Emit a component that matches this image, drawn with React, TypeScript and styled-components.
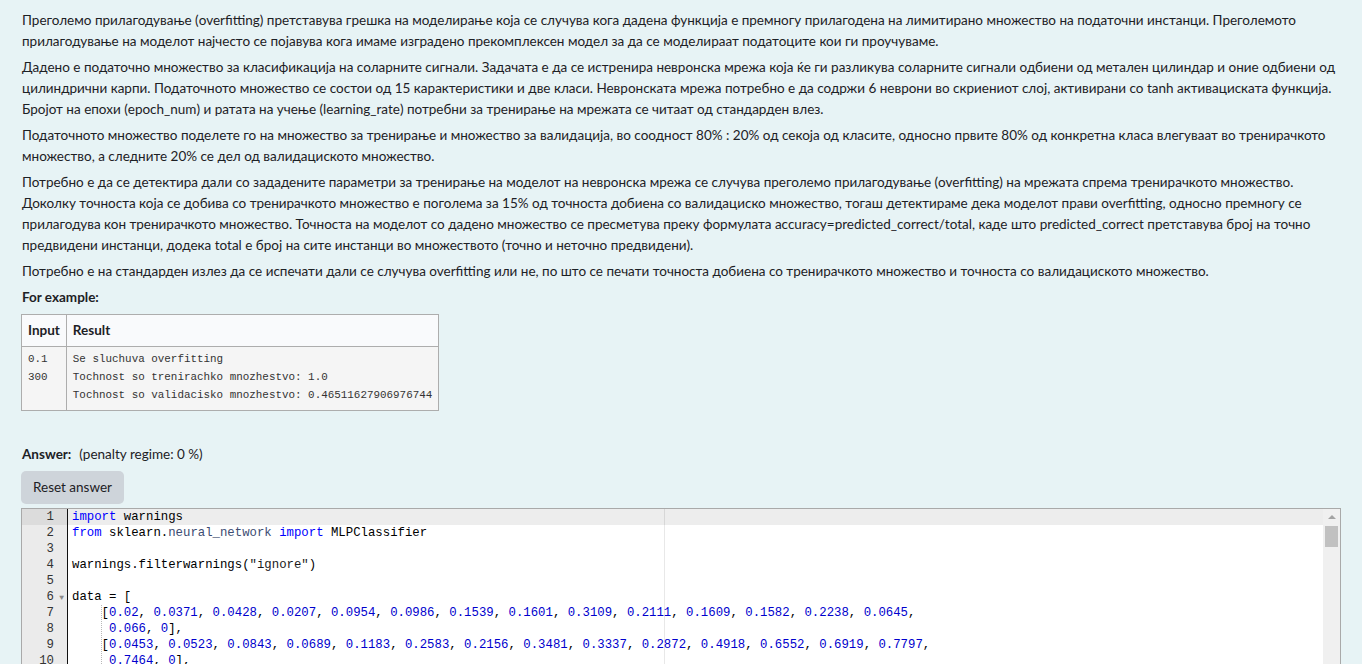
import React from 'react';
import styled, { createGlobalStyle } from 'styled-components';

// ── Global ────────────────────────────────────────────────────────────────

const GlobalStyle = createGlobalStyle`
  html, body {
    margin: 0;
    padding: 0;
    overflow: hidden;
    background: #e7f3f5;
  }
  body {
    font-family: Lato, "Noto Sans", sans-serif;
    font-size: 13.5px;
    color: #1d2125;
  }
`;

// ── Question text ─────────────────────────────────────────────────────────

const Page = styled.div`
  padding: 10px 21px 0 21px;
`;

const Para = styled.p`
  margin: 0 0 5px;
  line-height: 21px;
  padding-left: 1px;
`;

const Heading = styled.div`
  font-weight: 700;
  line-height: 21px;
  margin: 1px 0 6px;
  padding-left: 1px;
`;

const ExampleTable = styled.table`
  border-collapse: collapse;
  border: 1px solid #adadad;
`;

const Th = styled.th`
  text-align: left;
  font-weight: 700;
  line-height: 21px;
  padding: 5px 6px 5px 6px;
  background: #f9fafc;
  border: 1px solid #adadad;
`;

const Td = styled.td`
  vertical-align: top;
  padding: 3px 6px 6px;
  background: #f5f5f5;
  border: 1px solid #adadad;
`;

const Pre = styled.pre`
  margin: 0;
  font-family: "Liberation Mono", "DejaVu Sans Mono", monospace;
  font-size: 10.9px;
  line-height: 18px;
  color: #333;
`;

// ── Answer block ──────────────────────────────────────────────────────────

const AnswerLine = styled.div`
  margin-top: 33px;
  line-height: 21px;
  padding-left: 1px;
  display: flex;
  gap: 8px;
`;

const Bold = styled.span`
  font-weight: 700;
`;

const ResetButton = styled.button`
  display: block;
  margin-top: 6px;
  padding: 6px 12px;
  border: none;
  border-radius: 5px;
  background: #ced4da;
  color: #1d2125;
  font-family: inherit;
  font-size: 13.5px;
  line-height: 21px;
  cursor: pointer;
`;

// ── Code editor ───────────────────────────────────────────────────────────

const Editor = styled.div`
  margin-top: 4px;
  height: 300px;
  border: 1px solid #a9a9a9;
  display: flex;
  background: #fff;
  font-family: "Liberation Mono", "DejaVu Sans Mono", monospace;
  font-size: 12.33px;
  line-height: 16px;
  overflow: hidden;
`;

const Gutter = styled.div`
  width: 45px;
  flex: none;
  background: #ebebeb;
  border-right: 1px solid #111;
  color: #333;
`;

const GutterCell = styled.div<{ $active: boolean }>`
  height: 16px;
  display: flex;
  justify-content: flex-end;
  padding-right: 13px;
  position: relative;
  background: ${({ $active }) => ($active ? '#dcdcdc' : 'transparent')};
`;

const FoldMark = styled.span`
  position: absolute;
  right: 3px;
  top: 0;
  font-size: 8px;
  color: #8a8a8a;
  line-height: 17px;
`;

const Code = styled.div`
  flex: 1;
  position: relative;
`;

const PrintMargin = styled.div`
  position: absolute;
  top: 0;
  bottom: 0;
  left: calc(4px + 80ch);
  width: 1px;
  background: #e8e8e8;
`;

const CodeLine = styled.div<{ $active: boolean }>`
  position: relative;
  height: 16px;
  padding-left: 4px;
  white-space: pre;
  color: #000;
  background: ${({ $active }) => ($active ? 'rgba(0, 0, 0, 0.07)' : 'transparent')};
`;

const IndentGuide = styled.span`
  display: inline-block;
  width: 4ch;
  height: 16px;
  vertical-align: top;
  background: repeating-linear-gradient(to bottom, #b8b8b8 0 1px, transparent 1px 2px) right top / 1px 100% no-repeat;
`;

const Tok = styled.span<{ $kind: string }>`
  color: ${({ $kind }) =>
    $kind === 'kw' ? '#0000ff' :
    $kind === 'num' ? '#0000cd' :
    $kind === 'str' ? '#1a1a1a' :
    $kind === 'sup' ? '#3c4c72' :
    '#000'};
`;

const Scrollbar = styled.div`
  width: 17px;
  flex: none;
  background: #f0f0f0;
  display: flex;
  flex-direction: column;
  align-items: center;
  padding-top: 6px;
  gap: 7px;
`;

const ArrowUp = styled.div`
  width: 0;
  height: 0;
  border-left: 4px solid transparent;
  border-right: 4px solid transparent;
  border-bottom: 4px solid #a3a3a3;
`;

const Thumb = styled.div`
  width: 13px;
  height: 21px;
  background: #c1c1c1;
`;

// ── Data ──────────────────────────────────────────────────────────────────

const CODE = [
  'import warnings',
  'from sklearn.neural_network import MLPClassifier',
  '',
  'warnings.filterwarnings("ignore")',
  '',
  'data = [',
  '    [0.02, 0.0371, 0.0428, 0.0207, 0.0954, 0.0986, 0.1539, 0.1601, 0.3109, 0.2111, 0.1609, 0.1582, 0.2238, 0.0645,',
  '     0.066, 0],',
  '    [0.0453, 0.0523, 0.0843, 0.0689, 0.1183, 0.2583, 0.2156, 0.3481, 0.3337, 0.2872, 0.4918, 0.6552, 0.6919, 0.7797,',
  '     0.7464, 0],',
  '    [0.0262, 0.0582, 0.1099, 0.1083, 0.0974, 0.228, 0.2431, 0.3771, 0.5598, 0.6194, 0.6333, 0.706, 0.5544, 0.532,',
  '     0.6479, 0],',
  '    [0.01, 0.0171, 0.0623, 0.0205, 0.0205, 0.0368, 0.1098, 0.1276, 0.0598, 0.1264, 0.0881, 0.1992, 0.0184, 0.2261,',
  '     0.1729, 0],',
  '    [0.0762, 0.0666, 0.0481, 0.0394, 0.059, 0.0649, 0.1209, 0.2467, 0.3564, 0.4459, 0.4152, 0.3952, 0.4256, 0.4135,',
  '     0.4528, 0],',
  '    [0.0286, 0.0453, 0.0277, 0.0174, 0.0384, 0.099, 0.1201, 0.1833, 0.2105, 0.3039, 0.2988, 0.425, 0.6343, 0.8198,',
  '     1.0, 0],',
];

const FOLDABLE = new Set([6]);

const TOKEN_RE = /(\b(?:import|from)\b|"[^"]*"|\bneural_network\b|\d+(?:\.\d+)?)/g;

function tokenize(text: string) {
  const parts = text.split(TOKEN_RE).filter(p => p !== '');
  return parts.map(p => {
    let kind = 'plain';
    if (p === 'import' || p === 'from') kind = 'kw';
    else if (p.startsWith('"')) kind = 'str';
    else if (p === 'neural_network') kind = 'sup';
    else if (/^\d/.test(p)) kind = 'num';
    return { kind, text: p };
  });
}

const renderLine = (line: string) => {
  const lead = line.length - line.trimStart().length;
  const guides = line.trim() === '' ? 0 : Math.floor(lead / 4);
  const rest = line.slice(guides * 4);
  return (
    <>
      {Array.from({ length: guides }).map((_, i) => <IndentGuide key={i} />)}
      {tokenize(rest).map((t, i) => (
        <Tok key={i} $kind={t.kind}>{t.text}</Tok>
      ))}
    </>
  );
};

// ── App ───────────────────────────────────────────────────────────────────

export default function App() {
  return (
    <>
      <GlobalStyle />
      <Page>
        <Para>
          Преголемо прилагодување (overfitting) претставува грешка на моделирање која се случува кога дадена функција е премногу прилагодена на лимитирано множество на податочни инстанци. Преголемото прилагодување на моделот најчесто се појавува кога имаме изградено прекомплексен модел за да се моделираат податоците кои ги проучуваме.
        </Para>
        <Para>
          Дадено е податочно множество за класификација на соларните сигнали. Задачата е да се истренира невронска мрежа која ќе ги разликува соларните сигнали одбиени од метален цилиндар и оние одбиени од цилиндрични карпи. Податочното множество се состои од 15 карактеристики и две класи. Невронската мрежа потребно е да содржи 6 неврони во скриениот слој, активирани со tanh активациската функција. Бројот на епохи (epoch_num) и ратата на учење (learning_rate) потребни за тренирање на мрежата се читаат од стандарден влез.
        </Para>
        <Para>
          Податочното множество поделете го на множество за тренирање и множество за валидација, во соодност 80% : 20% од секоја од класите, односно првите 80% од конкретна класа влегуваат во тренирачкото множество, а следните 20% се дел од валидациското множество.
        </Para>
        <Para>
          Потребно е да се детектира дали со зададените параметри за тренирање на моделот на невронска мрежа се случува преголемо прилагодување (overfitting) на мрежата спрема тренирачкото множество. Доколку точноста која се добива со тренирачкото множество е поголема за 15% од точноста добиена со валидациско множество, тогаш детектираме дека моделот прави overfitting, односно премногу се прилагодува кон тренирачкото множество. Точноста на моделот со дадено множество се пресметува преку формулата accuracy=predicted_correct/total, каде што predicted_correct претставува број на точно предвидени инстанци, додека total е број на сите инстанци во множеството (точно и неточно предвидени).
        </Para>
        <Para>
          Потребно е на стандарден излез да се испечати дали се случува overfitting или не, по што се печати точноста добиена со тренирачкото множество и точноста со валидациското множество.
        </Para>

        <Heading>For example:</Heading>
        <ExampleTable>
          <thead>
            <tr>
              <Th>Input</Th>
              <Th>Result</Th>
            </tr>
          </thead>
          <tbody>
            <tr>
              <Td><Pre>{'0.1\n300'}</Pre></Td>
              <Td>
                <Pre>{'Se sluchuva overfitting\nTochnost so trenirachko mnozhestvo: 1.0\nTochnost so validacisko mnozhestvo: 0.46511627906976744'}</Pre>
              </Td>
            </tr>
          </tbody>
        </ExampleTable>

        <AnswerLine>
          <Bold>Answer:</Bold>
          <span>(penalty regime: 0 %)</span>
        </AnswerLine>
        <ResetButton type="button">Reset answer</ResetButton>

        <Editor>
          <Gutter>
            {CODE.map((_, i) => (
              <GutterCell key={i} $active={i === 0}>
                {i + 1}
                {FOLDABLE.has(i + 1) && <FoldMark>▼</FoldMark>}
              </GutterCell>
            ))}
          </Gutter>
          <Code>
            <PrintMargin />
            {CODE.map((line, i) => (
              <CodeLine key={i} $active={i === 0}>{renderLine(line)}</CodeLine>
            ))}
          </Code>
          <Scrollbar>
            <ArrowUp />
            <Thumb />
          </Scrollbar>
        </Editor>
      </Page>
    </>
  );
}
